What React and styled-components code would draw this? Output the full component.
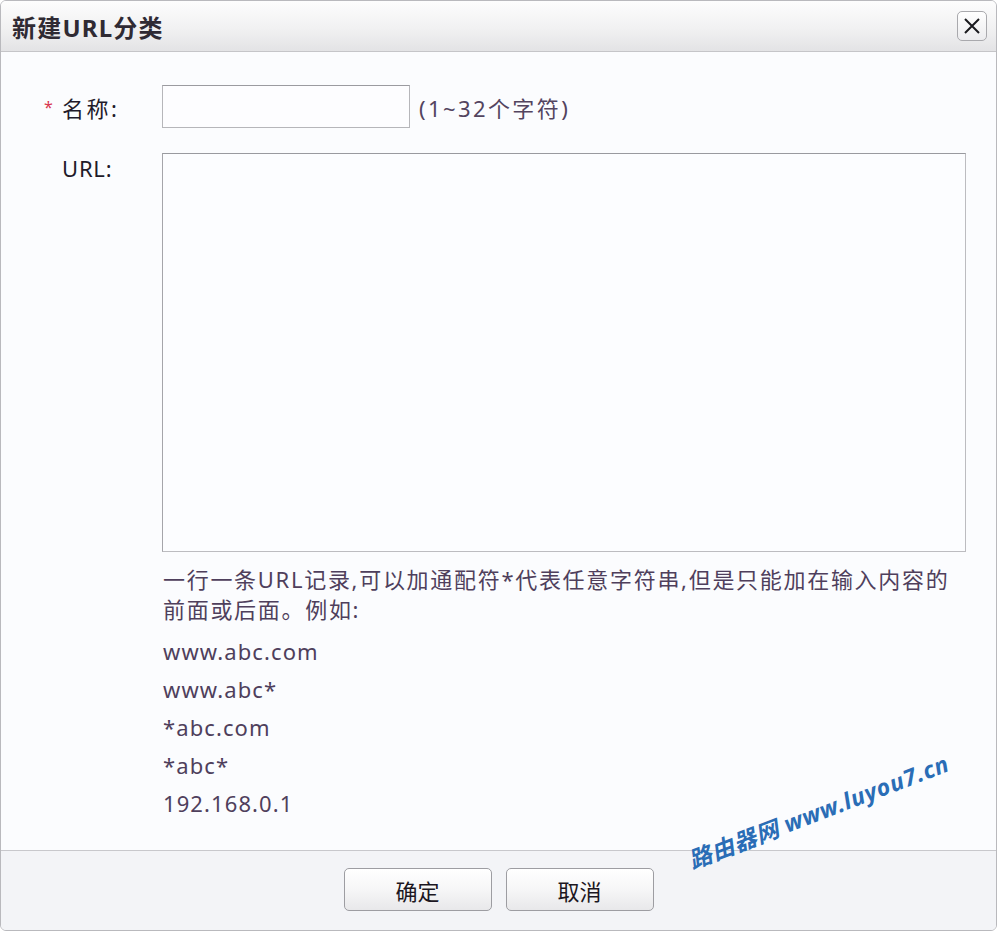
import React from "react";
import styled, { createGlobalStyle } from "styled-components";

const Global = createGlobalStyle`
  html, body { margin: 0; padding: 0; background: #ffffff; }
  body { font-family: "Noto Sans", "Noto Sans CJK SC", sans-serif; }
  * { box-sizing: border-box; }
`;

const Dialog = styled.div`
  position: relative;
  width: 997px;
  height: 931px;
  border: 1px solid #b9b9bd;
  border-radius: 6px;
  overflow: hidden;
  display: flex;
  flex-direction: column;
  background: #fbfcfe;
`;

const Header = styled.div`
  height: 51px;
  flex: none;
  display: flex;
  align-items: center;
  justify-content: space-between;
  padding: 0 9px 0 11px;
  background: linear-gradient(to bottom, #fdfdfd 0%, #f1f1f2 55%, #e3e3e5 100%);
  border-bottom: 1px solid #c5c5c8;
`;

const Title = styled.h1`
  margin: 0;
  font-family: "Noto Sans", "Noto Sans CJK SC", sans-serif;
  font-size: 24px;
  font-weight: 700;
  color: #2f2a33;
  letter-spacing: 1.2px;
`;

const CloseButton = styled.button`
  width: 30px;
  height: 30px;
  padding: 0;
  display: flex;
  align-items: center;
  justify-content: center;
  border: 1px solid #a9a9ad;
  border-radius: 5px;
  background: linear-gradient(to bottom, #ffffff, #ececee);
  color: #1b1b1f;
  cursor: pointer;
`;

const Body = styled.div`
  flex: 1;
  padding: 33px 0 0 0;
  display: flex;
  flex-direction: column;
`;

const Row = styled.div`
  display: flex;
  align-items: ${(p) => (p.$top ? "flex-start" : "center")};
  margin-bottom: ${(p) => p.$gap || 0}px;
`;

const LabelCell = styled.div`
  width: 161px;
  flex: none;
  display: flex;
  align-items: center;
  padding-left: 43px;
  font-size: 22px;
  color: #211a29;
  letter-spacing: ${(p) => (p.$wide ? 2.5 : 0.8)}px;
`;

const Star = styled.span`
  width: 18px;
  color: #d8364f;
  font-size: 16px;
  line-height: 1;
`;

const TextInput = styled.input`
  width: 248px;
  height: 43px;
  border: 1px solid #b6b6ba;
  border-top-color: #9b9ba0;
  background: #fdfdff;
  outline: none;
  font-size: 20px;
`;

const Hint = styled.span`
  margin-left: 9px;
  font-size: 22px;
  color: #53445f;
  letter-spacing: 2.4px;
`;

const UrlArea = styled.textarea`
  width: 804px;
  height: 399px;
  resize: none;
  border: 1px solid #bcbcc0;
  border-top-color: #999a9f;
  border-left-color: #a5a5aa;
  background: #fcfdff;
  outline: none;
`;

const Help = styled.div`
  margin-left: 162px;
  margin-top: 12px;
  width: 800px;
  color: #4f3f5c;
  font-size: 22px;
`;

const HelpText = styled.p`
  margin: 0 0 8px 0;
  line-height: 30px;
  letter-spacing: 1.7px;
`;

const Example = styled.div`
  height: 38px;
  line-height: 38px;
  letter-spacing: 1.1px;
`;

const Footer = styled.div`
  height: 80px;
  flex: none;
  border-top: 1px solid #c8c8cc;
  background: #f3f4f7;
  display: flex;
  justify-content: center;
  align-items: flex-start;
  padding-top: 17px;
  gap: 14px;
`;

const Button = styled.button`
  width: 148px;
  height: 43px;
  border: 1px solid #9d9da2;
  border-radius: 5px;
  background: linear-gradient(to bottom, #ffffff 0%, #f6f6f7 50%, #e8e8ea 100%);
  font-family: "Noto Sans CJK SC", sans-serif;
  font-size: 22px;
  color: #1c1722;
  cursor: pointer;
`;

const Watermark = styled.div`
  position: absolute;
  left: 688px;
  top: 842px;
  transform: rotate(-21deg);
  transform-origin: left center;
  font-family: "Noto Sans", "Noto Sans CJK SC", sans-serif;
  font-size: 23px;
  font-weight: 700;
  font-style: italic;
  color: #2a6db6;
  white-space: nowrap;
  letter-spacing: 0.8px;
  pointer-events: none;
`;

const examples = ["www.abc.com", "www.abc*", "*abc.com", "*abc*", "192.168.0.1"];

export default function App() {
  return (
    <>
      <Global />
      <Dialog>
        <Header>
          <Title>新建URL分类</Title>
          <CloseButton aria-label="关闭">
            <svg width="20" height="20" viewBox="0 0 20 20">
              <path d="M3 3 L17 17 M17 3 L3 17" stroke="#1b1b1f" strokeWidth="2" fill="none" />
            </svg>
          </CloseButton>
        </Header>
        <Body>
          <Row $gap={25}>
            <LabelCell $wide>
              <Star>*</Star>
              名称:
            </LabelCell>
            <TextInput />
            <Hint>(1~32个字符)</Hint>
          </Row>
          <Row $top>
            <LabelCell>
              <Star />
              URL:
            </LabelCell>
            <UrlArea />
          </Row>
          <Help>
            <HelpText>
              一行一条URL记录,可以加通配符*代表任意字符串,但是只能加在输入内容的前面或后面。例如:
            </HelpText>
            {examples.map((e) => (
              <Example key={e}>{e}</Example>
            ))}
          </Help>
        </Body>
        <Footer>
          <Button>确定</Button>
          <Button>取消</Button>
        </Footer>
        <Watermark>路由器网 www.luyou7.cn</Watermark>
      </Dialog>
    </>
  );
}
